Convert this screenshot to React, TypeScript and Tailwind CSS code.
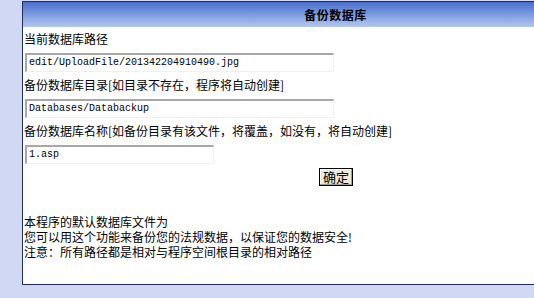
const cjk = "font-['SimSun','Noto_Sans_CJK_SC',sans-serif]";

function Field({ value, width }: { value: string; width: string }) {
  return (
    <div
      className={`mt-[6px] h-[19px] ${width} ml-[1px] border-t-2 border-l-2 border-t-[#a7a6aa] border-l-[#a7a6aa] border-b border-r border-b-[#f0f0f0] border-r-[#f0f0f0] bg-white pl-[2px] text-[10px] leading-[16px] text-black font-['Liberation_Mono',monospace]`}
    >
      {value}
    </div>
  );
}

function Label({ children }: { children: string }) {
  return <div className="mt-[5px] h-[16px] text-[12px] leading-[16px] text-black">{children}</div>;
}

export default function App() {
  return (
    <div className={`w-[534px] h-[298px] overflow-hidden bg-[#d0d8f4] pl-[22px] pt-[1px] ${cjk}`}>
      <div className="w-[627px] h-[284px] border border-[#1c2f5e] bg-white flex flex-col">
        {/* 标题栏 */}
        <div className="h-[25px] bg-gradient-to-b from-[#4a70cc] to-[#b3c6ef] flex items-center justify-center">
          <span className="text-[12px] font-bold text-black tracking-[0.5px]">备份数据库</span>
        </div>

        <div className="pl-[1px] pt-[4px] flex flex-col">
          <div className="h-[16px] text-[12px] leading-[16px] text-black">当前数据库路径</div>
          <Field value="edit/UploadFile/201342204910490.jpg" width="w-[309px]" />
          <Label>备份数据库目录[如目录不存在，程序将自动创建]</Label>
          <Field value="Databases/Databackup" width="w-[309px]" />
          <Label>备份数据库名称[如备份目录有该文件，将覆盖，如没有，将自动创建]</Label>
          <Field value="1.asp" width="w-[189px]" />

          <div className="mt-[4px] flex justify-center">
            <button
              type="button"
              className="h-[18px] w-[34px] border border-black bg-[#ece9d8] text-[13px] leading-[14px] text-black shadow-[inset_-1px_-1px_0_#a0a0a0,inset_1px_1px_0_#ffffff]"
            >
              确定
            </button>
          </div>

          {/* 说明 */}
          <div className="mt-[28px] text-[12px] leading-[15px] text-black">
            <div>本程序的默认数据库文件为</div>
            <div>您可以用这个功能来备份您的法规数据，以保证您的数据安全!</div>
            <div>注意：所有路径都是相对与程序空间根目录的相对路径</div>
          </div>
        </div>
      </div>
    </div>
  );
}
